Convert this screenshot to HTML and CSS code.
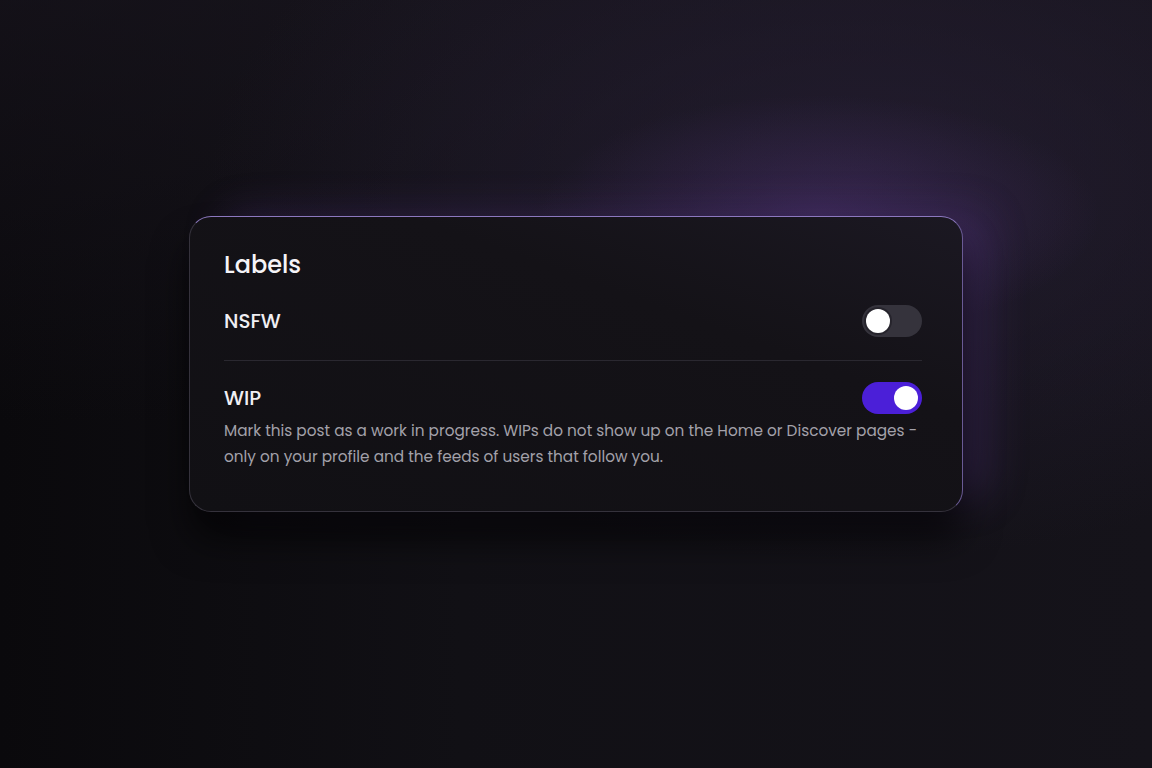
FILE: index.html
```html
<!DOCTYPE html>
<html lang="en">
<head>
    <meta charset="UTF-8">
    <meta name="viewport" content="width=device-width, initial-scale=1.0">
    <title>Labels</title>
    <link rel="stylesheet" href="styles.css">
</head>
<body>
    <div class="stage">
        <div class="card">
            <h2 class="card-title">Labels</h2>

            <div class="label-row">
                <span class="label-name">NSFW</span>
                <button class="switch" aria-pressed="false"><span class="knob"></span></button>
            </div>

            <hr class="divider">

            <div class="label-row">
                <span class="label-name">WIP</span>
                <button class="switch on" aria-pressed="true"><span class="knob"></span></button>
            </div>
            <p class="label-desc">Mark this post as a work in progress. WIPs do not show up on the Home or Discover pages - only on your profile and the feeds of users that follow you.</p>
        </div>
    </div>
</body>
</html>
```

FILE: styles.css
```css
html, body{
    margin: 0;
    height: 100%;
}

body{
    font-family: "Poppins", "Open Sans", sans-serif;
    color: #f2f1f5;
    background:
        radial-gradient(ellipse 280px 120px at 820px 215px, rgba(100, 62, 150, 0.32), rgba(100, 62, 150, 0) 100%),
        radial-gradient(ellipse 650px 380px at 860px 180px, rgba(40, 32, 56, 0.65), rgba(40, 32, 56, 0) 100%),
        linear-gradient(180deg, rgba(26, 22, 32, 0.6) 0%, rgba(26, 22, 32, 0) 55%),
        linear-gradient(90deg, #0a090c 0%, #111015 40%, #15131a 100%);
}

.stage{
    display: flex;
    padding: 216px 0 0 189px;
}

/* purple haze hugs the top and right edges, dark drop shadow below */
.card{
    box-sizing: border-box;
    width: 774px;
    height: 296px;
    padding: 32px 40px 0 34px;
    border-radius: 22px;
    background: linear-gradient(200deg, #1b1822 0%, #141217 35%, #111014 100%);
    border: 1px solid #35323c;
    border-top-color: #8c78bf;
    border-right-color: #6a5a95;
    box-shadow:
        0 28px 36px rgba(0, 0, 0, 0.6),
        30px -8px 40px -6px rgba(96, 60, 150, 0.3);
}

.card-title{
    margin: 0 0 24px;
    font-size: 24px;
    font-weight: 500;
    line-height: 32px;
    color: #f5f4f8;
}

.label-row{
    display: flex;
    align-items: center;
    justify-content: space-between;
    height: 32px;
}

.label-name{
    font-size: 20px;
    font-weight: 500;
    color: #f0eff3;
}

.divider{
    margin: 23px 0 21px;
    border: 0;
    height: 1px;
    background: #2a2830;
}

.switch{
    position: relative;
    width: 60px;
    height: 32px;
    padding: 0;
    border: 0;
    border-radius: 16px;
    background: #35333c;
}

.switch .knob{
    position: absolute;
    top: 4px;
    left: 4px;
    width: 24px;
    height: 24px;
    border-radius: 50%;
    background: #ffffff;
    box-shadow: 0 0 0 2px #26242c;
}

.switch.on{
    background: #4b1fd8;
}

.switch.on .knob{
    left: 32px;
    box-shadow: none;
}

.label-desc{
    margin: 4px 0 0;
    font-size: 15.3px;
    line-height: 26px;
    color: #a3a1aa;
}
```
